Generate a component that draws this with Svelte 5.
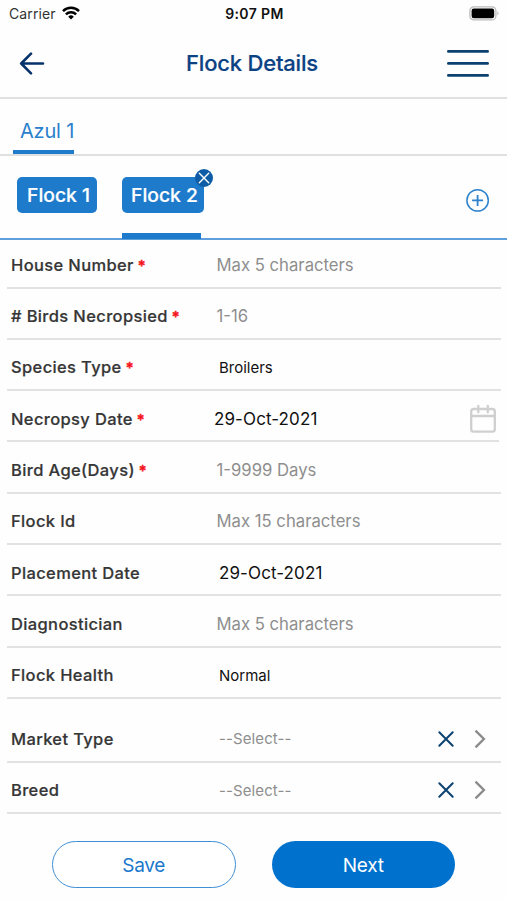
<script lang="ts">
  type Field = {
    label: string;
    value: string;
    required?: boolean;
    kind?: "placeholder" | "choice" | "date" | "select";
    icon?: "calendar";
    gap?: boolean;
  };

  const fields: Field[] = [
    { label: "House Number", value: "Max 5 characters", required: true, kind: "placeholder" },
    { label: "# Birds Necropsied", value: "1-16", required: true, kind: "placeholder" },
    { label: "Species Type", value: "Broilers", required: true, kind: "choice" },
    { label: "Necropsy Date", value: "29-Oct-2021", required: true, kind: "date", icon: "calendar" },
    { label: "Bird Age(Days)", value: "1-9999 Days", required: true, kind: "placeholder" },
    { label: "Flock Id", value: "Max 15 characters", kind: "placeholder" },
    { label: "Placement Date", value: "29-Oct-2021", kind: "date" },
    { label: "Diagnostician", value: "Max 5 characters", kind: "placeholder" },
    { label: "Flock Health", value: "Normal", kind: "choice" },
    { label: "Market Type", value: "--Select--", kind: "select", gap: true },
    { label: "Breed", value: "--Select--", kind: "select" }
  ];

  const flocks = ["Flock 1", "Flock 2"];
  let active = $state(1);
</script>

<div class="screen">
  <div class="status">
    <div class="carrier">
      <span>Carrier</span>
      <svg width="18" height="14" viewBox="0 0 18 14" fill="none" stroke="#000" stroke-width="2.5">
        <path d="M1 5.1a11.4 11.4 0 0 1 16 0" />
        <path d="M3.9 8.3a7.3 7.3 0 0 1 10.2 0" />
        <path d="M9 13.6 6.2 10.7a4 4 0 0 1 5.6 0Z" fill="#000" stroke="none" />
      </svg>
    </div>
    <span class="time">9:07 PM</span>
    <svg class="battery" width="31" height="15" viewBox="0 0 31 15">
      <rect x="0.9" y="0.9" width="26" height="13" rx="4" fill="#fff" stroke="#bbb" stroke-width="1.3" />
      <rect x="2.6" y="2.6" width="22.6" height="9.6" rx="2.2" fill="#000" />
      <path d="M28.5 5.2q2 2.2 0 4.4Z" fill="#aaa" />
    </svg>
  </div>

  <header>
    <button class="icon" aria-label="Back">
      <svg width="26" height="24" viewBox="0 0 26 24" fill="none" stroke="#06326b" stroke-width="2.6" stroke-linecap="round" stroke-linejoin="round">
        <path d="M24 12.5H2.4M12 2.7 2.2 12.5l9.8 9.8" />
      </svg>
    </button>
    <h1>Flock Details</h1>
    <button class="icon" aria-label="Menu">
      <svg width="44" height="30" viewBox="0 0 44 30" stroke="#0b426f" stroke-width="2.8" stroke-linecap="round">
        <path d="M2.4 3.4h39.2M2.4 15.4h39.2M2.4 27.4h39.2" />
      </svg>
    </button>
  </header>

  <nav class="farms">
    <button class="farm">Azul 1</button>
  </nav>

  <div class="flocks">
    {#each flocks as flock, i}
      <div class="flock" class:active={i === active}>
        <button class="chip" onclick={() => (active = i)}>{flock}</button>
        {#if i === active}
          <button class="remove" aria-label="Remove flock">
            <svg width="18" height="18" viewBox="0 0 18 18" stroke="#fff" stroke-width="1.4" stroke-linecap="round">
              <path d="m4.3 4.3 9.4 9.4M13.7 4.3l-9.4 9.4" />
            </svg>
          </button>
        {/if}
      </div>
    {/each}
    <button class="icon add" aria-label="Add flock">
      <svg width="24" height="24" viewBox="0 0 24 24" fill="none" stroke="#2c82cb" stroke-width="1.5">
        <circle cx="11.6" cy="12.4" r="10.7" />
        <path d="M11.6 6.9v11M6.1 12.4h11" stroke-width="1.8" />
      </svg>
    </button>
  </div>

  <form>
    {#each fields as field}
      <div class="row {field.kind}" class:gap={field.gap} class:calendar={field.icon}>
        <span class="label">{field.label}{#if field.required}<span class="star">*</span>{/if}</span>
        <span class="value">{field.value}</span>
        {#if field.icon}
          <svg width="28" height="30" viewBox="0 0 28 30" fill="none" stroke="#cfcfcf" stroke-width="2.3" stroke-linecap="round">
            <rect x="2.2" y="5" width="23.6" height="22.6" rx="2.4" />
            <path d="M2.2 12h23.6M9.3 1.8v6.5M18.8 1.8v6.5" />
          </svg>
        {/if}
        {#if field.kind === "select"}
          <svg class="clear" width="18" height="18" viewBox="0 0 18 18" stroke="#0b426f" stroke-width="2" stroke-linecap="round">
            <path d="m2.3 2.3 13.4 13.4M15.7 2.3 2.3 15.7" />
          </svg>
          <svg width="14" height="20" viewBox="0 0 14 20" fill="none" stroke="#8c8c8c" stroke-width="2.4">
            <path d="m2.5 1.7 8.4 8.3-8.4 8.3" />
          </svg>
        {/if}
      </div>
    {/each}
  </form>

  <footer>
    <button class="save">Save</button>
    <button class="next">Next</button>
  </footer>
</div>

<style>
  :global(body) {
    margin: 0;
    background: #fefefe;
  }

  .screen {
    width: 507px;
    height: 900px;
    overflow: hidden;
    display: flex;
    flex-direction: column;
    background: #fefefe;
    font-family: Inter, Roboto, sans-serif;
    color: #111;
  }

  button {
    font: inherit;
    border: 0;
    padding: 0;
    background: none;
  }

  svg {
    display: block;
    flex: none;
  }

  .status {
    height: 28px;
    display: grid;
    grid-template-columns: 1fr auto 1fr;
    align-items: center;
    padding: 0 7px 0 9px;
    font-size: 14px;
    line-height: 28px;
  }

  .carrier {
    display: flex;
    gap: 6px;
    align-items: center;
    color: #333;
    letter-spacing: 0.1px;
  }

  .carrier svg {
    margin-top: -2px;
  }

  .time {
    font-weight: 600;
    letter-spacing: 0.4px;
  }

  .battery {
    justify-self: end;
    margin-top: -2px;
  }

  header {
    height: 69px;
    display: grid;
    grid-template-columns: 1fr auto 1fr;
    align-items: center;
    padding: 0 17px 0 19px;
    border-bottom: 2px solid #e0e0e0;
  }

  header .icon:last-child {
    justify-self: end;
  }

  h1 {
    margin: 0 5px 0 0;
    font-size: 22px;
    font-weight: 500;
    letter-spacing: -0.2px;
    color: #0b4283;
    -webkit-text-stroke: 0.2px #0b4283;
  }

  .farms {
    height: 55px;
    display: flex;
    padding-left: 13px;
    border-bottom: 2px solid #e0e0e0;
  }

  .farm {
    height: 55px;
    box-sizing: border-box;
    padding: 13px 0 0 7px;
    border-bottom: 4px solid #1e7bcb;
    font-size: 20px;
    letter-spacing: -0.2px;
    color: #2b80cc;
  }

  .flocks {
    height: 82px;
    display: flex;
    gap: 25px;
    padding: 0 17px;
    border-bottom: 2px solid #5f9fdc;
  }

  .flock {
    position: relative;
    box-sizing: border-box;
    height: 83px;
    padding-top: 21px;
  }

  .flock.active::after {
    content: "";
    position: absolute;
    left: 0;
    bottom: 0;
    width: 79px;
    height: 6px;
    background: #1e7bcb;
  }

  .chip {
    width: 80px;
    height: 36px;
    padding-left: 3px;
    border-radius: 5px;
    background: #1e7bcb;
    color: #fff;
    font-size: 19.3px;
    font-weight: 500;
    -webkit-text-stroke: 0.2px #fff;
    white-space: nowrap;
  }

  .active .chip {
    width: 82px;
  }

  .remove {
    position: absolute;
    top: 13px;
    right: -9px;
    border-radius: 50%;
    background: #0d5ca5;
  }

  .add {
    margin: 6px 0 0 auto;
  }

  .icon {
    display: flex;
    align-items: center;
  }

  form {
    margin: 0 6px 0 7px;
  }

  .row {
    display: flex;
    align-items: center;
    box-sizing: border-box;
    height: 51.33px;
    padding: 5.6px 14px 0 4px;
    border-bottom: 2px solid #e2e2e2;
    font-size: 17px;
  }

  .row:first-child {
    height: 48.5px;
    padding-top: 3px;
  }

  .row.gap {
    height: 63.6px;
    padding-top: 17.2px;
  }

  .label {
    width: 206px;
    font-size: 16.5px;
    font-weight: 500;
    letter-spacing: 0.36px;
    color: #363636;
    -webkit-text-stroke: 0.2px #363636;
  }

  .star {
    margin-left: 4px;
    font-size: 15px;
    color: #f5141c;
    -webkit-text-stroke: 0.5px #f5141c;
  }

  .value {
    flex: 1;
    color: #111;
  }

  .placeholder .value {
    margin-left: -1px;
    padding-left: 0.5px;
    font-size: 16.7px;
    color: #8e8e8e;
  }

  .choice .value {
    padding-left: 2px;
    font-size: 15px;
  }

  .date .value {
    padding-left: 2px;
    letter-spacing: 0.1px;
  }

  .select .value {
    padding-left: 2px;
    font-size: 15px;
    letter-spacing: 0.1px;
    color: #8e8e8e;
  }

  .row.calendar {
    margin-right: 2px;
    padding-right: 2px;
  }

  .date.calendar .value {
    padding-left: 0;
    margin-left: -3px;
  }

  .clear {
    margin-right: 18px;
  }

  footer {
    display: flex;
    gap: 36px;
    padding: 27px 52px 0;
  }

  .save,
  .next {
    box-sizing: border-box;
    width: 184px;
    height: 47px;
    padding-top: 2px;
    border-radius: 24px;
    font-size: 19px;
  }

  .save {
    border: 1.5px solid #3f8fd6;
    background: #fff;
    color: #1b78cc;
    letter-spacing: -0.3px;
  }

  .next {
    background: #0072ce;
    color: #fff;
    letter-spacing: -0.2px;
  }
</style>
